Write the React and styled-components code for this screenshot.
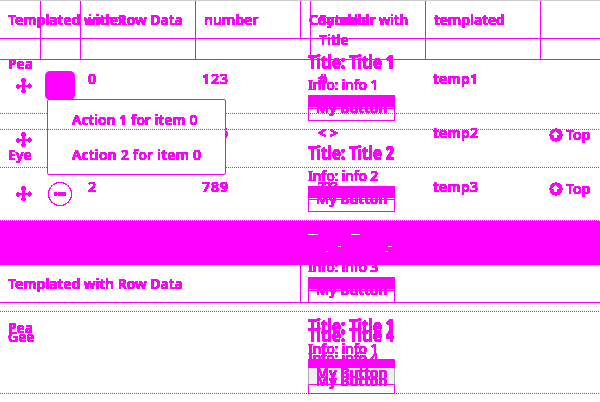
import React from "react";
import styled, { createGlobalStyle, css } from "styled-components";

const ink = "#ff00ff";

const GlobalStyle = createGlobalStyle`
  * { box-sizing: border-box; }
  body { margin: 0; background: #fff; overflow: hidden; }
`;

const Stage = styled.main`
  display: grid;
  width: 600px;
  height: 402px;
  overflow: hidden;
  border-top: 1px solid #cfcbd3;
  font: 600 14px/20px "Noto Sans", "Open Sans", sans-serif;
  color: ${ink};
`;
const Layer = styled.section`
  grid-area: 1 / 1;
  min-width: 0;
  width: 600px;
  z-index: ${(p) => (p.$front ? 2 : 0)};
`;
const Text = styled.span`
  display: block;
  white-space: nowrap;
  letter-spacing: ${(p) => p.$track || 0}px;
  filter: url(#hard-ink);
`;

const columns = css`
  display: grid;
  grid-template-columns: 41px 40px 115px 115px 115px 115px 59px;
`;
const HeaderRow = styled.div`
  ${columns}
  height: 59px;
  border-bottom: 1px solid ${ink};
`;
const HeaderCell = styled.div`
  padding: 9px 0 0 ${(p) => p.$left ?? 8}px;
  border-right: ${(p) => (p.$last ? "0" : `1px solid ${ink}`)};
`;
const DotRule = styled.div`
  height: 1px;
  background: repeating-linear-gradient(90deg, ${ink} 0 1px, transparent 1px 2px);
`;
const DataRow = styled.div`
  ${columns}
  height: 53px;
`;
const Cell = styled.div`
  padding: ${(p) => p.$top ?? 9}px 0 0 ${(p) => p.$left ?? 7}px;
`;
const TopAction = styled.div`
  display: flex;
  align-items: center;
  gap: 3px;
  height: 20px;
  margin: 11px 0 0 8px;
`;
const Icon = styled.svg`
  display: block;
  flex: none;
  shape-rendering: crispEdges;
`;
const MenuButton = styled.div`
  width: 30px;
  height: 29px;
  border-radius: 5px;
  background: ${ink};
`;
const Menu = styled.div`
  position: absolute;
  left: 47px;
  top: 99px;
  width: 179px;
  height: 76px;
  padding: 10px 24px;
  display: grid;
  grid-template-rows: 35px 20px;
  border: 1px solid ${ink};
  border-radius: 2px;
  background: #fff;
  z-index: 1;
`;

const TemplateHeader = styled.div`
  display: grid;
  grid-template-columns: 301px 1fr;
  height: 38px;
  border-bottom: 1px solid ${ink};
`;
const TemplateHeading = styled.div`
  padding: 9px 0 0 8px;
  border-right: ${(p) => (p.$last ? "0" : `1px solid ${ink}`)};
`;
const TemplateRow = styled.div`
  display: grid;
  grid-template-columns: 308px 1fr;
  height: 90px;
`;
const Name = styled.div`
  padding: 15px 0 0 8px;
`;
const Card = styled.div`
  padding-top: 11px;
`;
const CardTitle = styled(Text)`
  width: 120px;
  height: 24px;
  font-size: 20px;
  font-weight: 800;
  line-height: 23px;
  transform: scaleX(0.73);
  transform-origin: 0 0;
`;
const Info = styled(Text)`
  height: 21px;
  line-height: 22px;
  font-weight: 500;
  letter-spacing: -0.2px;
`;
const Button = styled.div`
  width: 87px;
  height: 26px;
  border: 1px solid ${ink};
  border-color: ${(p) => (p.$shaded ? `${ink} #aaa` : ink)};
  background: ${(p) => (p.$shaded ? "linear-gradient(#e6e6e6, #f4f4f4)" : "transparent")};
`;
const ButtonFill = styled.div`
  height: ${(p) => (p.$short ? 8 : 11)}px;
  margin: 0 -1px;
  background: ${ink};
`;
const ButtonLine = styled.div`
  height: 2px;
  margin-top: 1px;
  border-top: 1px solid ${ink};
`;
const ButtonText = styled(Text)`
  margin: ${(p) => p.$shift}px 0 0 7px;
`;
const ButtonTail = styled.div`
  display: flex;
  flex-direction: column;
  width: 87px;
  height: 26px;
`;
const TailText = styled(Text)`
  height: 20px;
  padding: 3px 0 0 8px;
`;
const TailBox = styled.div`
  height: 9px;
  margin-top: -3px;
  border: 1px solid ${ink};
  border-top: 0;
`;
const Band = styled.div`
  height: 44px;
  padding: 13px 0 0 308px;
  display: grid;
  grid-template-columns: 10px 33px 30px 15px;
  background: ${ink};
`;
const Glint = styled.i`
  display: block;
  height: 1px;
  width: ${(p) => p.$width}px;
  margin-top: ${(p) => p.$top || 0}px;
  margin-left: ${(p) => p.$left || 0}px;
  background: #fff;
`;
const Spacer = styled.div`
  height: ${(p) => p.$height}px;
`;

function MoveIcon() {
  return (
    <Icon width="16" height="16" viewBox="0 0 16 16" fill={ink}>
      <path d="M6 0h3v1h1v3H9v3h3V6h1V5h1v1h1v1h1v2h-1v1h-1v1h-1v-1h-1V9H9v3h1v2H9v1H6v-1H5v-2h1V9H4v1H3v1H1v-1H0V7h1V6h2v1h3V4H5V1h1z" />
    </Icon>
  );
}
function TopIcon() {
  return (
    <Icon width="14" height="14" viewBox="0 0 14 14">
      <circle cx="7" cy="7" r="6.7" fill={ink} />
      <path d="M6 3h1v1h1v1h1v1h1v1H8v3H7V6H6v4H5V7H3V6h1V5h1V4h1z" fill="#fff" />
      <path d="M6 5h1v5H6z" fill="#fff" />
    </Icon>
  );
}
function MinusIcon() {
  return (
    <Icon width="26" height="26" viewBox="0 0 26 26">
      <circle cx="13" cy="13" r="11.5" fill="none" stroke={ink} strokeWidth="1.2" />
      <path d="M7 11h3v1h1v-1h8v4h-8v-1h-1v1H7z" fill={ink} />
    </Icon>
  );
}

const items = [
  { index: "0", number: "123", symbol: "#", title: "temp1" },
  { index: "1", number: "456", symbol: "< >", title: "temp2", top: true },
  { index: "2", number: "789", symbol: "???", title: "temp3", top: true },
];

function TemplateItem({ name, number, shaded, tail }) {
  return (
    <>
      <TemplateRow>
        <Name>{name && <Text>{name}</Text>}</Name>
        <Card>
          <CardTitle>Title: Title {number}</CardTitle>
          <Info>Info: info {number}</Info>
          {tail ? (
            <ButtonTail>
              <TailText>My Button</TailText>
              <TailBox />
            </ButtonTail>
          ) : (
            <Button $shaded={shaded}>
              <ButtonFill $short={shaded} />
              {!shaded && <ButtonLine />}
              <ButtonText $shift={shaded ? -5 : -12}>My Button</ButtonText>
            </Button>
          )}
        </Card>
      </TemplateRow>
      <DotRule />
    </>
  );
}

function TemplateHead({ second }) {
  return (
    <TemplateHeader>
      <TemplateHeading><Text>Templated with Row Data</Text></TemplateHeading>
      <TemplateHeading $last>{second && <Text $track={-0.25}>{second}</Text>}</TemplateHeading>
    </TemplateHeader>
  );
}

export default function App() {
  return (
    <>
      <GlobalStyle />
      <Stage>
        <Layer>
          <HeaderRow>
            <HeaderCell />
            <HeaderCell />
            <HeaderCell $left={7}><Text>index</Text></HeaderCell>
            <HeaderCell><Text>number</Text></HeaderCell>
            <HeaderCell><Text>Symbol</Text><Text>Title</Text></HeaderCell>
            <HeaderCell><Text>templated</Text></HeaderCell>
            <HeaderCell $last />
          </HeaderRow>
          {items.map((item, i) => (
            <React.Fragment key={item.index}>
              <DataRow>
                <Cell $top={18} $left={16}><MoveIcon /></Cell>
                <Cell $top={i === 0 ? 11 : 13} $left={i === 0 ? 4 : 6}>
                  {i === 0 ? <MenuButton /> : <MinusIcon />}
                </Cell>
                <Cell><Text>{item.index}</Text></Cell>
                <Cell $left={6}><Text $track={1}>{item.number}</Text></Cell>
                <Cell><Text>{item.symbol}</Text></Cell>
                <Cell><Text $track={0.2}>{item.title}</Text></Cell>
                {item.top && <TopAction><TopIcon /><Text>Top</Text></TopAction>}
              </DataRow>
              <DotRule />
            </React.Fragment>
          ))}
        </Layer>
        <Menu>
          <Text $track={0}>Action 1 for item 0</Text>
          <Text $track={0.2}>Action 2 for item 0</Text>
        </Menu>
        <Layer $front>
          <TemplateHead second="Controller with" />
          <TemplateItem name="Pea" number={1} />
          <TemplateItem name="Eye" number={2} />
          <TemplateItem number={3} />
        </Layer>
        <Layer $front>
          <Spacer $height={220} />
          <Band>
            <Glint $width={10} />
            <div><Glint $width={3} $top={12} $left={20} /><Glint $width={2} $top={4} $left={8} /></div>
            <Glint $width={9} />
            <div><Glint $width={4} $top={12} $left={7} /><Glint $width={3} $top={4} $left={4} /></div>
          </Band>
          <TemplateHead />
          <TemplateItem name="Pea" number={1} shaded />
        </Layer>
        <Layer $front>
          <Spacer $height={311} />
          <TemplateItem name="Gee" number={4} tail />
        </Layer>
      </Stage>
      <Icon width="0" height="0">
        <filter id="hard-ink" x="-5%" y="-10%" width="110%" height="120%" colorInterpolationFilters="sRGB">
          <feComponentTransfer>
            <feFuncA type="linear" slope="40" intercept="-0.6" />
          </feComponentTransfer>
        </filter>
      </Icon>
    </>
  );
}
